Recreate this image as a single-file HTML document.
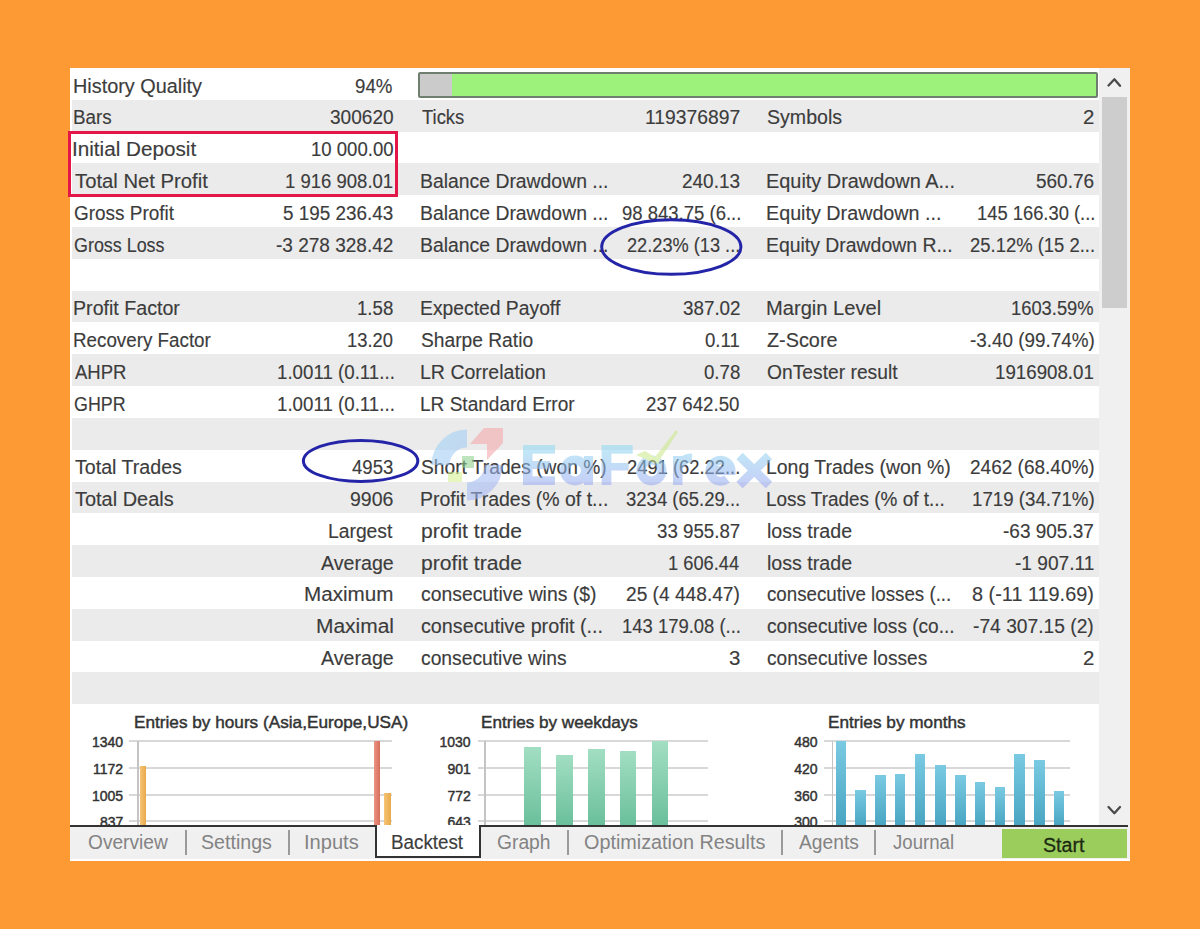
<!DOCTYPE html>
<html><head><meta charset="utf-8"><title>Backtest</title>
<style>
*{margin:0;padding:0;box-sizing:border-box}
html,body{width:1200px;height:929px;overflow:hidden;background:#fe9a33;font-family:"Liberation Sans",sans-serif}
#panel{position:absolute;left:70px;top:68px;width:1060px;height:793px;background:#fff}
.band{position:absolute;left:72px;width:1027px;background:#ebebeb}
.t{position:absolute;white-space:nowrap;color:#3c3c3c;font-size:20px;line-height:20px;transform-origin:0 0;-webkit-text-stroke:0.15px #3c3c3c}
.yl{position:absolute;white-space:nowrap;color:#333;font-size:14px;line-height:14px;transform-origin:0 0;-webkit-text-stroke:0.45px #333}
.ttl{position:absolute;white-space:nowrap;color:#333;font-size:17px;line-height:17px;transform-origin:0 0;-webkit-text-stroke:0.45px #333}
.tab{position:absolute;white-space:nowrap;color:#838383;font-size:20px;line-height:20px;transform-origin:0 0}
.sep{position:absolute;top:830px;width:2px;height:25px;background:#9a9a9a}
.grid{position:absolute;height:2px;background:#d8d8d8}
.bar{position:absolute}
</style></head><body>
<div id="root" style="position:absolute;left:0;top:0;width:1200px;height:929px">
<div id="panel"></div>

<div class="band" style="top:100px;height:32px"></div>
<div class="band" style="top:163px;height:32px"></div>
<div class="band" style="top:227px;height:32px"></div>
<div class="band" style="top:291px;height:31px"></div>
<div class="band" style="top:354px;height:32px"></div>
<div class="band" style="top:418px;height:32px"></div>
<div class="band" style="top:482px;height:31px"></div>
<div class="band" style="top:545px;height:32px"></div>
<div class="band" style="top:609px;height:32px"></div>
<div class="band" style="top:672px;height:32px"></div>
<div class="t" style="left:72.52px;top:75.57px;transform:scaleX(0.9922);">History Quality</div>
<div class="t" style="left:355.37px;top:75.57px;transform:scaleX(0.9333);">94%</div>
<div class="t" style="left:72.62px;top:107.37px;transform:scaleX(0.9395);">Bars</div>
<div class="t" style="left:329.75px;top:107.37px;transform:scaleX(0.9538);">300620</div>
<div class="t" style="left:421.70px;top:107.37px;transform:scaleX(0.9200);">Ticks</div>
<div class="t" style="left:644.63px;top:107.37px;transform:scaleX(0.9660);">119376897</div>
<div class="t" style="left:767.32px;top:107.37px;transform:scaleX(0.9787);">Symbols</div>
<div class="t" style="left:1082.98px;top:107.37px;transform:scaleX(1.0222);">2</div>
<div class="t" style="left:72.43px;top:139.17px;transform:scaleX(1.0339);">Initial Deposit</div>
<div class="t" style="left:311.07px;top:139.17px;transform:scaleX(0.9276);">10 000.00</div>
<div class="t" style="left:74.50px;top:170.97px;transform:scaleX(1.0130);">Total Net Profit</div>
<div class="t" style="left:285.27px;top:170.97px;transform:scaleX(0.9261);">1 916 908.01</div>
<div class="t" style="left:419.76px;top:170.97px;transform:scaleX(0.9686);">Balance Drawdown ...</div>
<div class="t" style="left:682.35px;top:170.97px;transform:scaleX(0.9492);">240.13</div>
<div class="t" style="left:766.31px;top:170.97px;transform:scaleX(0.9946);">Equity Drawdown A...</div>
<div class="t" style="left:1036.25px;top:170.97px;transform:scaleX(0.9492);">560.76</div>
<div class="t" style="left:73.55px;top:202.77px;transform:scaleX(0.9476);">Gross Profit</div>
<div class="t" style="left:283.16px;top:202.77px;transform:scaleX(0.9443);">5 195 236.43</div>
<div class="t" style="left:419.76px;top:202.77px;transform:scaleX(0.9686);">Balance Drawdown ...</div>
<div class="t" style="left:621.77px;top:202.77px;transform:scaleX(0.9254);">98 843.75 (6...</div>
<div class="t" style="left:766.33px;top:202.77px;transform:scaleX(0.9868);">Equity Drawdown ...</div>
<div class="t" style="left:976.68px;top:202.77px;transform:scaleX(0.9175);">145 166.30 (...</div>
<div class="t" style="left:73.61px;top:234.57px;transform:scaleX(0.8950);">Gross Loss</div>
<div class="t" style="left:275.75px;top:234.57px;transform:scaleX(0.9508);">-3 278 328.42</div>
<div class="t" style="left:419.76px;top:234.57px;transform:scaleX(0.9686);">Balance Drawdown ...</div>
<div class="t" style="left:627.39px;top:234.57px;transform:scaleX(0.9098);">22.23% (13 ...</div>
<div class="t" style="left:766.36px;top:234.57px;transform:scaleX(0.9704);">Equity Drawdown R...</div>
<div class="t" style="left:969.68px;top:234.57px;transform:scaleX(0.9218);">25.12% (15 2...</div>
<div class="t" style="left:72.54px;top:298.17px;transform:scaleX(0.9813);">Profit Factor</div>
<div class="t" style="left:357.27px;top:298.17px;transform:scaleX(0.9324);">1.58</div>
<div class="t" style="left:419.77px;top:298.17px;transform:scaleX(0.9653);">Expected Payoff</div>
<div class="t" style="left:682.86px;top:298.17px;transform:scaleX(0.9407);">387.02</div>
<div class="t" style="left:766.29px;top:298.17px;transform:scaleX(1.0063);">Margin Level</div>
<div class="t" style="left:1010.68px;top:298.17px;transform:scaleX(0.9169);">1603.59%</div>
<div class="t" style="left:72.62px;top:329.97px;transform:scaleX(0.9393);">Recovery Factor</div>
<div class="t" style="left:346.78px;top:329.97px;transform:scaleX(0.9184);">13.20</div>
<div class="t" style="left:420.74px;top:329.97px;transform:scaleX(0.9600);">Sharpe Ratio</div>
<div class="t" style="left:704.87px;top:329.97px;transform:scaleX(0.9306);">0.11</div>
<div class="t" style="left:767.31px;top:329.97px;transform:scaleX(0.9913);">Z-Score</div>
<div class="t" style="left:969.66px;top:329.97px;transform:scaleX(0.9431);">-3.40 (99.74%)</div>
<div class="t" style="left:74.50px;top:361.77px;transform:scaleX(0.9259);">AHPR</div>
<div class="t" style="left:276.77px;top:361.77px;transform:scaleX(0.9350);">1.0011 (0.11...</div>
<div class="t" style="left:419.75px;top:361.77px;transform:scaleX(0.9762);">LR Correlation</div>
<div class="t" style="left:703.87px;top:361.77px;transform:scaleX(0.9324);">0.78</div>
<div class="t" style="left:767.34px;top:361.77px;transform:scaleX(0.9630);">OnTester result</div>
<div class="t" style="left:994.96px;top:361.77px;transform:scaleX(0.9356);">1916908.01</div>
<div class="t" style="left:73.61px;top:393.57px;transform:scaleX(0.8929);">GHPR</div>
<div class="t" style="left:276.77px;top:393.57px;transform:scaleX(0.9350);">1.0011 (0.11...</div>
<div class="t" style="left:419.80px;top:393.57px;transform:scaleX(0.9525);">LR Standard Error</div>
<div class="t" style="left:645.97px;top:393.57px;transform:scaleX(0.9333);">237 642.50</div>
<div class="t" style="left:74.50px;top:457.17px;transform:scaleX(0.9815);">Total Trades</div>
<div class="t" style="left:351.90px;top:457.17px;transform:scaleX(0.9273);">4953</div>
<div class="t" style="left:420.74px;top:457.17px;transform:scaleX(0.9597);">Short Trades (won %)</div>
<div class="t" style="left:627.38px;top:457.17px;transform:scaleX(0.9174);">2491 (62.22...</div>
<div class="t" style="left:766.36px;top:457.17px;transform:scaleX(0.9717);">Long Trades (won %)</div>
<div class="t" style="left:969.65px;top:457.17px;transform:scaleX(0.9504);">2462 (68.40%)</div>
<div class="t" style="left:74.50px;top:488.97px;transform:scaleX(0.9969);">Total Deals</div>
<div class="t" style="left:349.72px;top:488.97px;transform:scaleX(0.9767);">9906</div>
<div class="t" style="left:419.75px;top:488.97px;transform:scaleX(0.9737);">Profit Trades (% of t...</div>
<div class="t" style="left:626.37px;top:488.97px;transform:scaleX(0.9256);">3234 (65.29...</div>
<div class="t" style="left:766.41px;top:488.97px;transform:scaleX(0.9459);">Loss Trades (% of t...</div>
<div class="t" style="left:971.67px;top:488.97px;transform:scaleX(0.9349);">1719 (34.71%)</div>
<div class="t" style="left:328.07px;top:520.77px;transform:scaleX(0.9646);">Largest</div>
<div class="t" style="left:420.64px;top:520.77px;transform:scaleX(1.0564);">profit trade</div>
<div class="t" style="left:656.96px;top:520.77px;transform:scaleX(0.9356);">33 955.87</div>
<div class="t" style="left:767.32px;top:520.77px;transform:scaleX(0.9812);">loss trade</div>
<div class="t" style="left:1002.95px;top:520.77px;transform:scaleX(0.9500);">-63 905.37</div>
<div class="t" style="left:321.10px;top:552.57px;transform:scaleX(0.9808);">Average</div>
<div class="t" style="left:420.64px;top:552.57px;transform:scaleX(1.0564);">profit trade</div>
<div class="t" style="left:668.09px;top:552.57px;transform:scaleX(0.9130);">1 606.44</div>
<div class="t" style="left:767.32px;top:552.57px;transform:scaleX(0.9812);">loss trade</div>
<div class="t" style="left:1014.74px;top:552.57px;transform:scaleX(0.9568);">-1 907.11</div>
<div class="t" style="left:303.94px;top:584.37px;transform:scaleX(1.0321);">Maximum</div>
<div class="t" style="left:420.73px;top:584.37px;transform:scaleX(0.9682);">consecutive wins ($)</div>
<div class="t" style="left:626.34px;top:584.37px;transform:scaleX(0.9573);">25 (4 448.47)</div>
<div class="t" style="left:767.36px;top:584.37px;transform:scaleX(0.9366);">consecutive losses (...</div>
<div class="t" style="left:972.01px;top:584.37px;transform:scaleX(0.9934);">8 (-11 119.69)</div>
<div class="t" style="left:316.20px;top:616.17px;transform:scaleX(1.0479);">Maximal</div>
<div class="t" style="left:420.71px;top:616.17px;transform:scaleX(0.9863);">consecutive profit (...</div>
<div class="t" style="left:622.18px;top:616.17px;transform:scaleX(0.9222);">143 179.08 (...</div>
<div class="t" style="left:767.35px;top:616.17px;transform:scaleX(0.9536);">consecutive loss (co...</div>
<div class="t" style="left:973.04px;top:616.17px;transform:scaleX(0.9613);">-74 307.15 (2)</div>
<div class="t" style="left:321.10px;top:647.97px;transform:scaleX(0.9808);">Average</div>
<div class="t" style="left:420.74px;top:647.97px;transform:scaleX(0.9633);">consecutive wins</div>
<div class="t" style="left:729.08px;top:647.97px;transform:scaleX(1.0222);">3</div>
<div class="t" style="left:767.35px;top:647.97px;transform:scaleX(0.9542);">consecutive losses</div>
<div class="t" style="left:1082.98px;top:647.97px;transform:scaleX(1.0222);">2</div>
<div style="position:absolute;left:418px;top:72px;width:680px;height:26px;border:2px solid #6f7f6f;border-radius:2px;background:linear-gradient(to right,#cbcbcb 0,#cbcbcb 32px,#9cf27a 32px)"></div>
<div style="position:absolute;left:1099px;top:68px;width:31px;height:758px;background:#f0f0f0"></div>
<div style="position:absolute;left:1102px;top:97px;width:25px;height:211px;background:#cdcdcd"></div>
<svg style="position:absolute;left:1104px;top:72px" width="20" height="20"><path d="M4.5 13.5 L10.4 7.3 L16 13.8" fill="none" stroke="#4a4a4a" stroke-width="2.3" stroke-linecap="round" stroke-linejoin="round"/></svg>
<svg style="position:absolute;left:1104px;top:800px" width="20" height="20"><path d="M4.5 7 L10.4 13.2 L16 7" fill="none" stroke="#4a4a4a" stroke-width="2.3" stroke-linecap="round" stroke-linejoin="round"/></svg>
<div class="ttl" style="left:133.99px;top:714.01px;transform:scaleX(1.0112);">Entries by hours (Asia,Europe,USA)</div>
<div class="yl" style="left:92.00px;top:734.85px;transform:scaleX(1.0000);">1340</div>
<div class="yl" style="left:93.00px;top:761.75px;transform:scaleX(1.0000);">1172</div>
<div class="yl" style="left:92.00px;top:788.55px;transform:scaleX(1.0000);">1005</div>
<div class="yl" style="left:100.00px;top:815.05px;transform:scaleX(1.0000);">837</div>
<div class="grid" style="left:129px;top:739.8px;width:263.4px"></div>
<div class="grid" style="left:129px;top:766.7px;width:263.4px"></div>
<div class="grid" style="left:129px;top:793.5px;width:263.4px"></div>
<div class="grid" style="left:129px;top:820.0px;width:263.4px"></div>
<div style="position:absolute;left:137.05px;top:741px;width:1.5px;height:85px;background:#c4c4c4"></div>
<div class="bar" style="left:139.5px;top:765.5px;width:6.5px;height:60.5px;background:linear-gradient(to right,#f6c476,#e9a94a)"></div>
<div class="bar" style="left:374px;top:741px;width:6.0px;height:85.0px;background:linear-gradient(to right,#ea9484,#d86c5c)"></div>
<div class="bar" style="left:383.5px;top:793px;width:7.2px;height:33.0px;background:linear-gradient(to right,#f6c476,#e9a94a)"></div>
<div class="ttl" style="left:480.99px;top:714.01px;transform:scaleX(1.0065);">Entries by weekdays</div>
<div class="yl" style="left:439.50px;top:734.85px;transform:scaleX(1.0000);">1030</div>
<div class="yl" style="left:447.50px;top:761.75px;transform:scaleX(1.0000);">901</div>
<div class="yl" style="left:447.50px;top:788.55px;transform:scaleX(1.0000);">772</div>
<div class="yl" style="left:447.50px;top:815.05px;transform:scaleX(1.0000);">643</div>
<div class="grid" style="left:477.7px;top:739.8px;width:229.90000000000003px"></div>
<div class="grid" style="left:477.7px;top:766.7px;width:229.90000000000003px"></div>
<div class="grid" style="left:477.7px;top:793.5px;width:229.90000000000003px"></div>
<div class="grid" style="left:477.7px;top:820.0px;width:229.90000000000003px"></div>
<div style="position:absolute;left:484.35px;top:741px;width:1.5px;height:85px;background:#c4c4c4"></div>
<div class="bar" style="left:524.2px;top:747.4px;width:17.2px;height:78.6px;background:linear-gradient(to bottom,#a2dec2,#6abf9b)"></div>
<div class="bar" style="left:556px;top:754.8px;width:17.0px;height:71.2px;background:linear-gradient(to bottom,#a2dec2,#6abf9b)"></div>
<div class="bar" style="left:588px;top:749px;width:16.6px;height:77.0px;background:linear-gradient(to bottom,#a2dec2,#6abf9b)"></div>
<div class="bar" style="left:620.3px;top:751.3px;width:15.9px;height:74.7px;background:linear-gradient(to bottom,#a2dec2,#6abf9b)"></div>
<div class="bar" style="left:651.7px;top:741.3px;width:16.8px;height:84.7px;background:linear-gradient(to bottom,#a2dec2,#6abf9b)"></div>
<div class="ttl" style="left:827.99px;top:714.01px;transform:scaleX(1.0119);">Entries by months</div>
<div class="yl" style="left:794.30px;top:734.85px;transform:scaleX(1.0000);">480</div>
<div class="yl" style="left:794.30px;top:761.75px;transform:scaleX(1.0000);">420</div>
<div class="yl" style="left:794.30px;top:788.55px;transform:scaleX(1.0000);">360</div>
<div class="yl" style="left:794.30px;top:815.05px;transform:scaleX(1.0000);">300</div>
<div class="grid" style="left:824px;top:739.8px;width:246px"></div>
<div class="grid" style="left:824px;top:766.7px;width:246px"></div>
<div class="grid" style="left:824px;top:793.5px;width:246px"></div>
<div class="grid" style="left:824px;top:820.0px;width:246px"></div>
<div style="position:absolute;left:831.75px;top:741px;width:1.5px;height:85px;background:#c4c4c4"></div>
<div class="bar" style="left:835.5px;top:741px;width:10.5px;height:85.0px;background:linear-gradient(to bottom,#7acae2,#48a5c2)"></div>
<div class="bar" style="left:855.3px;top:789.6px;width:10.5px;height:36.4px;background:linear-gradient(to bottom,#7acae2,#48a5c2)"></div>
<div class="bar" style="left:875.2px;top:775px;width:10.4px;height:51.0px;background:linear-gradient(to bottom,#7acae2,#48a5c2)"></div>
<div class="bar" style="left:895px;top:773.7px;width:10.4px;height:52.3px;background:linear-gradient(to bottom,#7acae2,#48a5c2)"></div>
<div class="bar" style="left:915.2px;top:753.7px;width:10.3px;height:72.3px;background:linear-gradient(to bottom,#7acae2,#48a5c2)"></div>
<div class="bar" style="left:935px;top:765.4px;width:10.7px;height:60.6px;background:linear-gradient(to bottom,#7acae2,#48a5c2)"></div>
<div class="bar" style="left:954.6px;top:774.7px;width:11.0px;height:51.3px;background:linear-gradient(to bottom,#7acae2,#48a5c2)"></div>
<div class="bar" style="left:974.8px;top:782px;width:10.6px;height:44.0px;background:linear-gradient(to bottom,#7acae2,#48a5c2)"></div>
<div class="bar" style="left:994.5px;top:786.6px;width:10.5px;height:39.4px;background:linear-gradient(to bottom,#7acae2,#48a5c2)"></div>
<div class="bar" style="left:1014px;top:753.6px;width:11.0px;height:72.4px;background:linear-gradient(to bottom,#7acae2,#48a5c2)"></div>
<div class="bar" style="left:1034px;top:760px;width:11.0px;height:66.0px;background:linear-gradient(to bottom,#7acae2,#48a5c2)"></div>
<div class="bar" style="left:1054px;top:790.6px;width:10.4px;height:35.4px;background:linear-gradient(to bottom,#7acae2,#48a5c2)"></div>
<div style="position:absolute;left:70px;top:826px;width:1060px;height:33px;background:#f0f0f0"></div>
<div style="position:absolute;left:70px;top:824.5px;width:1058px;height:2px;background:#333"></div>
<div style="position:absolute;left:374.5px;top:825px;width:106.5px;height:33px;background:#fff;border:2px solid #333;border-top:none"></div>
<div class="tab" style="left:87.64px;top:831.77px;transform:scaleX(0.9566);">Overview</div>
<div class="tab" style="left:201.22px;top:831.77px;transform:scaleX(0.9803);">Settings</div>
<div class="tab" style="left:303.79px;top:831.77px;transform:scaleX(1.0038);">Inputs</div>
<div class="tab" style="left:497.24px;top:831.77px;transform:scaleX(0.9630);">Graph</div>
<div class="tab" style="left:583.51px;top:831.77px;transform:scaleX(0.9890);">Optimization Results</div>
<div class="tab" style="left:799.30px;top:831.77px;transform:scaleX(0.9613);">Agents</div>
<div class="tab" style="left:892.80px;top:831.77px;transform:scaleX(0.9308);">Journal</div>
<div class="sep" style="left:184.7px"></div>
<div class="sep" style="left:288.3px"></div>
<div class="sep" style="left:566.5px"></div>
<div class="sep" style="left:780.8px"></div>
<div class="sep" style="left:874.3px"></div>
<div class="t" style="left:391.42px;top:831.77px;transform:scaleX(0.9400);">Backtest</div>
<div style="position:absolute;left:1002px;top:829px;width:125px;height:29px;background:#9acd5c"></div>
<div class="t" style="left:1043.32px;top:834.57px;transform:scaleX(0.9829);color:#1c2a12;-webkit-text-stroke:0.3px #1c2a12">Start</div>
<div style="position:absolute;left:68px;top:130.5px;width:330px;height:66.5px;border:3px solid #e3164a"></div>
<svg style="position:absolute;left:0;top:0" width="1200" height="929"><ellipse cx="671.3" cy="247" rx="69.6" ry="27.3" fill="none" stroke="#2424a8" stroke-width="3"/><ellipse cx="360.6" cy="460.9" rx="57.2" ry="20.5" fill="none" stroke="#2424a8" stroke-width="3"/></svg>
<svg style="position:absolute;left:0;top:0" width="1200" height="929">
<defs>
<linearGradient id="wg" gradientUnits="userSpaceOnUse" x1="0" y1="445" x2="0" y2="486"><stop offset="0" stop-color="#8fdcf2"/><stop offset="1" stop-color="#9aa8f2"/></linearGradient>
<linearGradient id="lg" gradientUnits="userSpaceOnUse" x1="432" y1="428" x2="500" y2="500"><stop offset="0" stop-color="#9ed8f6"/><stop offset="1" stop-color="#a4b0f4"/></linearGradient>
</defs>
<g opacity="0.56">
<path d="M440.5 465 A26.5 26.5 0 0 1 467 438.5" fill="none" stroke="url(#lg)" stroke-width="18"/>
<path d="M493.5 465 A26.5 26.5 0 0 1 467 491.5" fill="none" stroke="url(#lg)" stroke-width="18"/>
<polygon points="470,444 484,428 503,428 503,443 487,460 487,444" fill="#f4a4a8"/>
<rect x="462" y="456" width="12" height="12" fill="#8ccf8c"/>
<rect x="448" y="472" width="14" height="10" fill="#d4f08c"/>
<g fill="url(#wg)">
<rect x="523" y="445" width="9.5" height="40"/><rect x="523" y="445" width="32" height="8.7"/><rect x="523" y="461" width="27" height="8"/><rect x="523" y="476.3" width="32" height="8.7"/>
<rect x="601.7" y="445" width="9.7" height="40"/><rect x="601.7" y="445" width="31" height="8.7"/><rect x="601.7" y="463" width="27" height="7.5"/>
<rect x="584" y="456" width="9" height="29"/>
<rect x="673" y="456" width="9.5" height="29"/>
</g>
<g fill="none" stroke="url(#wg)" stroke-width="9">
<circle cx="575" cy="470.5" r="10.5"/>
<circle cx="651.5" cy="470.5" r="10.5"/>
<path d="M677.7 472 A14 14 0 0 1 692 458"/>
<path d="M709 470.5 H731 A10.5 10.5 0 1 0 727 479"/>
<path d="M739.5 456 L769 485 M769 456 L739.5 485"/>
</g>
<polygon points="636,455 645,451 655,457 676,430 678,432 657,464" fill="#cce888"/>
</g>
</svg>
</div></body></html>
